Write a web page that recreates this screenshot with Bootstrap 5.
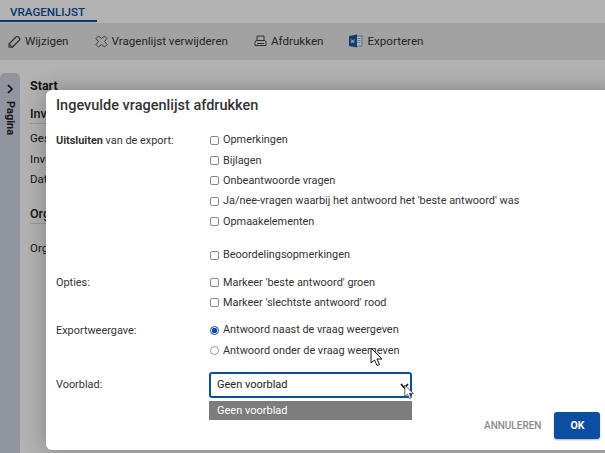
<!DOCTYPE html>
<html lang="nl">
<head>
<meta charset="utf-8">
<link href="https://cdn.jsdelivr.net/npm/bootstrap@5.3.0/dist/css/bootstrap.min.css" rel="stylesheet">
<style>
html,body{height:100%;overflow:hidden}
body{font-family:Roboto,"Liberation Sans",sans-serif;font-size:11.5px;color:#222;background:#fff}
.vl-page{position:relative;width:605px;height:453px;overflow:hidden}
.vl-tabs{height:23px}
.vl-tab{width:97px;height:22px;padding:4px 0 0 10px;font-size:11.6px;font-weight:500;color:#0b4ea2;border-bottom:2px solid #0b4ea2;line-height:16px}
.vl-toolbar{height:37px;background:#e9e9e9;font-size:11.6px;color:#333;padding-left:8px}
.vl-tool{gap:4px;margin-right:26px}
.vl-tool svg{display:block}
.vl-body{height:393px;padding-top:13px}
.vl-side{width:20px;height:380px;background:#cfd6e4;border-radius:5px 5px 0 0;font-weight:700;color:#222;text-align:center;padding-top:7px}
.vl-vert{writing-mode:vertical-rl;font-size:11px;margin:4px auto 0;line-height:20px}
.vl-main{padding-left:10px;font-size:11.5px}
.vl-start{font-weight:700;font-size:12.5px;margin:5px 0 11px;line-height:16px}
.vl-h{font-weight:500;font-size:12.5px;line-height:18px;border-bottom:1px solid #ddd;width:200px;margin-bottom:4px}
.vl-row{height:20.500px;line-height:20px}
.vl-org{margin-top:15px}
.vl-org2{margin-top:14px}
.vl-backdrop{position:absolute;inset:0;background:rgba(0,0,0,.3)}
.vl-modal{position:absolute;left:46px;top:90px;width:575px;height:360px;background:#fff;border-radius:6px 0 0 6px;padding:0 10px;box-shadow:0 0 22px rgba(0,0,0,.28)}
.vl-title{font-size:14.5px;font-weight:500;color:#333;line-height:20px;padding-top:6px;height:40px}
.vl-grid{font-size:10.900px;color:#333}
.vl-label{width:153px;flex:none}
.vl-opt{height:20.400px;line-height:20px;gap:4px;padding-left:1px;margin:0}
.vl-check{width:9px;height:9px;border:1px solid #888;border-radius:2px;background:#fff;flex:none;margin:0;appearance:none}
.vl-radio{width:9px;height:9px;border:1px solid #999;border-radius:50%;background:#fff;flex:none;margin:0;appearance:none}
.vl-radio:checked{border-color:#0b4ea2;background:radial-gradient(circle,#0b4ea2 0 2.600px,#fff 3px)}
.vl-gap1{margin-top:13px}
.vl-gap2{margin-top:7px}
.vl-gap3{margin-top:11px}
.vl-select{width:203px;height:26px;border:2px solid #0b4ea2;border-radius:3px;padding-left:6px;line-height:22px;font-size:11px;color:#222;position:relative}
.vl-caret{position:absolute;right:1px;top:9px}
.vl-dd{position:absolute;left:209px;top:401px;width:203px;height:19px;background:#7c7c7c;color:#fff;padding-left:8px;font-size:11px;line-height:19px}
.vl-foot{position:absolute;left:484px;top:412px;gap:13px}
.vl-cancel{color:#8a8a8a;font-size:10px;font-weight:500;line-height:27px;padding:0}
.vl-ok{width:46px;height:27px;background:#0b4ea2;color:#fff;font-weight:700;font-size:10.500px;border-radius:3px;border:0;padding:0;box-shadow:0 1px 2px rgba(0,0,0,.3)}
.vl-cursor{position:absolute;pointer-events:none}
</style>
</head>
<body>
<div class="vl-page">
  <div class="vl-tabs"><div class="vl-tab">VRAGENLIJST</div></div>
  <div class="vl-toolbar d-flex align-items-center">
    <div class="vl-tool d-flex align-items-center">
      <svg width="13" height="13" viewBox="0 0 13 13" fill="none" stroke="#444" stroke-width="1.200"><path d="M1 9 8 2a1.600 1.600 0 0 1 2.300 0l1 1a1.600 1.600 0 0 1 0 2.300L4.200 12.300 1 12z"/><path d="M1.500 9.300 4 11.800"/></svg>
      <span>Wijzigen</span></div>
    <div class="vl-tool d-flex align-items-center">
      <svg width="13" height="13" viewBox="0 0 13 13" fill="none" stroke="#555" stroke-width="1"><path d="M3.500 1 6.500 3.500 9.500 1l2.500 2.500L9.500 6.500 12 9.500 9.500 12l-3-2.500-3 2.500L1 9.500l2.500-3L1 3.500z"/></svg>
      <span>Vragenlijst verwijderen</span></div>
    <div class="vl-tool d-flex align-items-center">
      <svg width="13" height="12" viewBox="0 0 13 12" fill="none" stroke="#444" stroke-width="1"><path d="M3 5V1h7v4M2 5.500h9l1 1.500v3.500H1V7zM3 8.500h7"/></svg>
      <span>Afdrukken</span></div>
    <div class="vl-tool d-flex align-items-center">
      <svg width="14" height="14" viewBox="0 0 14 14"><rect x="6" y="2" width="7" height="10" fill="#fff" stroke="#5b8ec4" stroke-width=".8"/><path d="M8.500 4.500h3M8.500 6.500h3M8.500 8.500h3" stroke="#5b8ec4" stroke-width=".7"/><path d="M0 2 8 .5v13L0 12z" fill="#15589f"/><path d="M2 5l.8 4 .9-3 .9 3 .8-4" fill="none" stroke="#fff" stroke-width=".7"/></svg>
      <span>Exporteren</span></div>
  </div>
  <div class="vl-body d-flex">
    <div class="vl-side"><svg width="8" height="10" viewBox="0 0 8 10" fill="none" stroke="#111" stroke-width="1.600"><path d="M2 1l4 4-4 4"/></svg><div class="vl-vert">Pagina</div></div>
    <div class="vl-main">
      <div class="vl-start">Start</div>
      <div class="vl-h">Inventarisatie</div>
      <div class="vl-row">Gesteld door</div>
      <div class="vl-row">Invuldatum</div>
      <div class="vl-row">Datum</div>
      <div class="vl-h vl-org">Organisatie</div>
      <div class="vl-row vl-org2">Organisatie</div>
    </div>
  </div>
  <div class="vl-backdrop"></div>
  <div class="vl-modal">
    <div class="vl-title">Ingevulde vragenlijst afdrukken</div>
    <div class="vl-grid">
      <div class="d-flex">
        <div class="vl-label lh-lg"><b class="fw-bold">Uitsluiten</b> van de export:</div>
        <div>
          <label class="vl-opt d-flex align-items-center"><input type="checkbox" class="vl-check">Opmerkingen</label>
          <label class="vl-opt d-flex align-items-center"><input type="checkbox" class="vl-check">Bijlagen</label>
          <label class="vl-opt d-flex align-items-center"><input type="checkbox" class="vl-check">Onbeantwoorde vragen</label>
          <label class="vl-opt d-flex align-items-center"><input type="checkbox" class="vl-check">Ja/nee-vragen waarbij het antwoord het 'beste antwoord' was</label>
          <label class="vl-opt d-flex align-items-center"><input type="checkbox" class="vl-check">Opmaakelementen</label>
          <label class="vl-opt d-flex align-items-center vl-gap1"><input type="checkbox" class="vl-check">Beoordelingsopmerkingen</label>
        </div>
      </div>
      <div class="d-flex vl-gap2">
        <div class="vl-label lh-lg">Opties:</div>
        <div>
          <label class="vl-opt d-flex align-items-center"><input type="checkbox" class="vl-check">Markeer 'beste antwoord' groen</label>
          <label class="vl-opt d-flex align-items-center"><input type="checkbox" class="vl-check">Markeer 'slechtste antwoord' rood</label>
        </div>
      </div>
      <div class="d-flex vl-gap2">
        <div class="vl-label lh-lg">Exportweergave:</div>
        <div>
          <label class="vl-opt d-flex align-items-center"><input type="radio" name="w" class="vl-radio" checked>Antwoord naast de vraag weergeven</label>
          <label class="vl-opt d-flex align-items-center"><input type="radio" name="w" class="vl-radio">Antwoord onder de vraag weergeven</label>
        </div>
      </div>
      <div class="d-flex align-items-center vl-gap3">
        <div class="vl-label">Voorblad:</div>
        <div class="vl-select">Geen voorblad
          <svg class="vl-caret" width="9" height="7" viewBox="0 0 9 7" fill="none" stroke="#111" stroke-width="1.700"><path d="M1 1l3.500 4L8 1"/></svg>
        </div>
      </div>
    </div>
  </div>
  <div class="vl-dd">Geen voorblad</div>
  <div class="vl-foot d-flex align-items-center">
    <button type="button" class="btn vl-cancel border-0">ANNULEREN</button>
    <button type="button" class="btn vl-ok">OK</button>
  </div>
  <svg class="vl-cursor" style="left:370px;top:347px" width="13" height="20" viewBox="0 0 13 20"><path d="M1 1v15l3.500-3 2.500 5.500 2.500-1L7 12h5z" fill="#fff" stroke="#111" stroke-width="1"/></svg>
  <svg class="vl-cursor" style="left:404px;top:384px" width="10" height="16" viewBox="0 0 13 20"><path d="M1 1v15l3.500-3 2.500 5.500 2.500-1L7 12h5z" fill="#fff" stroke="#333" stroke-width="1"/></svg>
</div>
<script src="https://cdn.jsdelivr.net/npm/bootstrap@5.3.0/dist/js/bootstrap.bundle.min.js"></script>
</body>
</html>
